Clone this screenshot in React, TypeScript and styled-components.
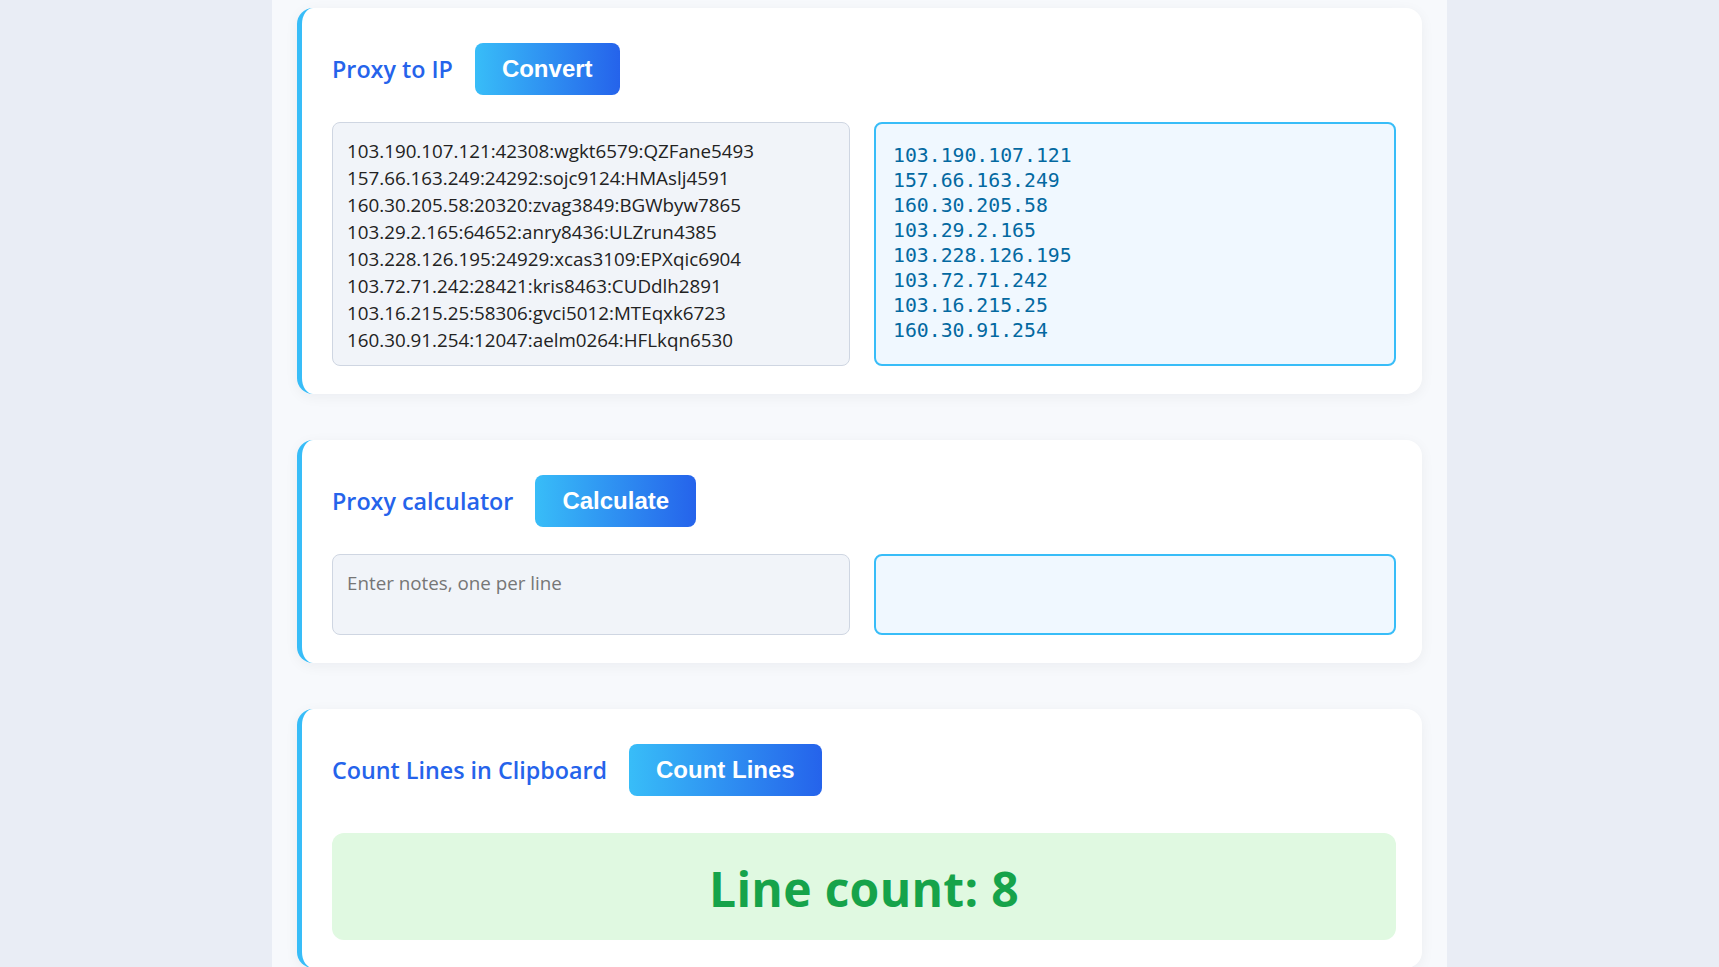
import React, { useState } from "react";
import styled, { createGlobalStyle } from "styled-components";

const GlobalStyle = createGlobalStyle`
  html, body {
    margin: 0;
    padding: 0;
    background: #e9edf5;
    font-family: "Open Sans", "Noto Sans", sans-serif;
  }
  * {
    box-sizing: border-box;
  }
`;

const Page = styled.div`
  width: 1175px;
  min-height: 100vh;
  margin: 0 auto;
  padding: 8px 25px 0;
  background: #f7f9fc;
  overflow: hidden;
`;

const Card = styled.section`
  background: #fff;
  border-left: 5px solid #38bdf8;
  border-radius: 16px;
  padding: 35px 26px 28px 30px;
  margin-bottom: 46px;
  box-shadow: 0 3px 14px rgba(15, 23, 42, 0.05);
`;

const Header = styled.div<{ $spacing?: number }>`
  display: flex;
  align-items: center;
  gap: 22px;
  margin-bottom: ${(p) => p.$spacing ?? 27}px;
`;

const Title = styled.h2`
  margin: 0;
  font-size: 23.3px;
  font-weight: 600;
  color: #2563eb;
`;

const ActionButton = styled.button`
  border: none;
  border-radius: 8px;
  padding: 12px 27px;
  background: linear-gradient(90deg, #38bdf8, #2563eb);
  color: #fff;
  font-family: "Liberation Sans", Arial, sans-serif;
  font-size: 24px;
  font-weight: 700;
  cursor: pointer;
`;

const Columns = styled.div`
  display: grid;
  grid-template-columns: 518fr 522fr;
  gap: 24px;
`;

const Input = styled.textarea<{ $height: number }>`
  display: block;
  width: 100%;
  height: ${(p) => p.$height}px;
  padding: 15px 14px 11px;
  border: 1px solid #cfd6e2;
  border-radius: 8px;
  background: #f1f4f9;
  color: #222;
  font-family: "Open Sans", "Noto Sans", sans-serif;
  font-size: 18.8px;
  line-height: 27px;
  resize: none;
  overflow: hidden;
  outline: none;
  &::placeholder {
    color: #767676;
  }
`;

const Output = styled.div<{ $height: number }>`
  height: ${(p) => p.$height}px;
  padding: 19px 17px;
  border: 2px solid #38bdf8;
  border-radius: 8px;
  background: #f0f8ff;
  color: #0369a1;
  font-family: "DejaVu Sans Mono", "Liberation Mono", monospace;
  font-size: 19.8px;
  line-height: 25px;
  white-space: pre;
  overflow: hidden;
`;

const ResultBox = styled.div`
  padding: 23px 20px 18px;
  border-radius: 12px;
  background: #e0f9e1;
  color: #16a34a;
  text-align: center;
  font-size: 48px;
  font-weight: 700;
  line-height: 66px;
  letter-spacing: 0.3px;
`;

const proxies = [
  "103.190.107.121:42308:wgkt6579:QZFane5493",
  "157.66.163.249:24292:sojc9124:HMAslj4591",
  "160.30.205.58:20320:zvag3849:BGWbyw7865",
  "103.29.2.165:64652:anry8436:ULZrun4385",
  "103.228.126.195:24929:xcas3109:EPXqic6904",
  "103.72.71.242:28421:kris8463:CUDdlh2891",
  "103.16.215.25:58306:gvci5012:MTEqxk6723",
  "160.30.91.254:12047:aelm0264:HFLkqn6530",
].join("\n");

const toIps = (text: string) =>
  text
    .split("\n")
    .filter((line) => line.trim())
    .map((line) => line.split(":")[0])
    .join("\n");

const App = () => {
  const [proxyText, setProxyText] = useState(proxies);
  const [ips, setIps] = useState(toIps(proxies));
  const [notes, setNotes] = useState("");
  const [total, setTotal] = useState("");
  const [lineCount, setLineCount] = useState(8);

  const onCalculate = () => {
    const lines = notes.split("\n").filter((l) => l.trim());
    setTotal(lines.length ? String(lines.length) : "");
  };

  const onCountLines = () => {
    setLineCount(proxyText.split("\n").filter((l) => l.trim()).length);
  };

  return (
    <>
      <GlobalStyle />
      <Page>
        <Card>
          <Header>
            <Title>Proxy to IP</Title>
            <ActionButton onClick={() => setIps(toIps(proxyText))}>
              Convert
            </ActionButton>
          </Header>
          <Columns>
            <Input
              $height={244}
              value={proxyText}
              onChange={(e) => setProxyText(e.target.value)}
            />
            <Output $height={244}>{ips}</Output>
          </Columns>
        </Card>

        <Card>
          <Header>
            <Title>Proxy calculator</Title>
            <ActionButton onClick={onCalculate}>Calculate</ActionButton>
          </Header>
          <Columns>
            <Input
              $height={81}
              placeholder="Enter notes, one per line"
              value={notes}
              onChange={(e) => setNotes(e.target.value)}
            />
            <Output $height={81}>{total}</Output>
          </Columns>
        </Card>

        <Card>
          <Header $spacing={37}>
            <Title>Count Lines in Clipboard</Title>
            <ActionButton onClick={onCountLines}>Count Lines</ActionButton>
          </Header>
          <ResultBox>Line count: {lineCount}</ResultBox>
        </Card>
      </Page>
    </>
  );
};

export default App;
